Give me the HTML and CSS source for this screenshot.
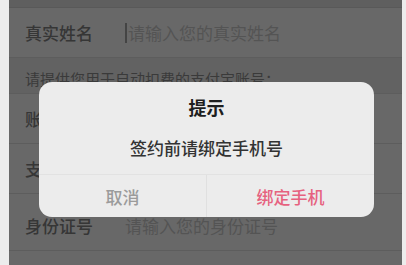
FILE: index.html
```html
<!DOCTYPE html>
<html lang="zh">
<head>
<meta charset="utf-8">
<link rel="stylesheet" href="styles.css">
</head>
<body>
<div class="screen">
  <div class="topbar"></div>
  <div class="row"><span class="label">真实姓名</span><span class="input"><span class="cursor"></span>请输入您的真实姓名</span></div>
  <div class="hint">请提供您用于自动扣费的支付宝账号：</div>
  <div class="row"><span class="label">账号</span><span class="input">请输入支付宝账号</span></div>
  <div class="row"><span class="label">支付宝</span><span class="input">请输入支付宝</span></div>
  <div class="row tall"><span class="label">身份证号</span><span class="input">请输入您的身份证号</span></div>
  <div class="rest"></div>

  <div class="dialog">
    <div class="title">提示</div>
    <div class="msg">签约前请绑定手机号</div>
    <div class="actions">
      <div class="btn cancel">取消</div>
      <div class="btn ok">绑定手机</div>
    </div>
  </div>
</div>
</body>
</html>
```
FILE: styles.css
```css
html, body {
  margin: 0;
  padding: 0;
  background: #ececec;
  width: 406px;
  height: 265px;
  overflow: hidden;
  font-family: "Noto Sans CJK SC", "Noto Sans", sans-serif;
}
.screen {
  position: relative;
  margin-left: 9px;
  width: 393px;
  height: 265px;
  background: #676767;
  display: flex;
  flex-direction: column;
}
.topbar {
  height: 7px;
  background: #5f5f5f;
  border-bottom: 1px solid #595959;
  flex-shrink: 0;
}
.row {
  height: 49px;
  display: flex;
  align-items: center;
  border-bottom: 1px solid #5d5d5d;
  background: #686868;
  flex-shrink: 0;
  box-sizing: content-box;
}
.row.tall { height: 49px; padding-top: 7px; }
.label {
  width: 100px;
  padding-left: 16px;
  font-size: 17px;
  font-weight: 500;
  color: #363636;
}
.input {
  display: flex;
  align-items: center;
  font-size: 17px;
  color: #545454;
}
.cursor {
  width: 2px;
  height: 20px;
  background: #444;
  margin-right: 1px;
}
.hint {
  height: 36px;
  box-sizing: border-box;
  padding-top: 8px;
  background: #626262;
  border-bottom: 1px solid #5d5d5d;
  padding-left: 16px;
  font-size: 15px;
  color: #3a3a3a;
  line-height: 26px;
  flex-shrink: 0;
}
.rest { flex: 1; background: #686868; }
.dialog {
  position: absolute;
  left: 30px;
  top: 82px;
  width: 335px;
  height: 135px;
  background: #ececec;
  border-radius: 13px;
  display: flex;
  flex-direction: column;
  align-items: center;
  padding-top: 14px;
  box-sizing: border-box;
}
.title {
  font-size: 18px;
  font-weight: bold;
  line-height: 22px;
  color: #1e1e1e;
}
.msg {
  margin-top: 19px;
  font-size: 17px;
  line-height: 22px;
  font-weight: 500;
  color: #333;
}
.actions {
  margin-top: 15px;
  align-self: stretch;
  flex: 1;
  display: flex;
  border-top: 1px solid #e2e2e2;
}
.btn {
  flex: 1;
  display: flex;
  align-items: center;
  justify-content: center;
  font-size: 17px;
  font-weight: 500;
}
.cancel { color: #9b9b9b; border-right: 1px solid #e0e0e0; }
.ok { color: #e6627f; }
```
